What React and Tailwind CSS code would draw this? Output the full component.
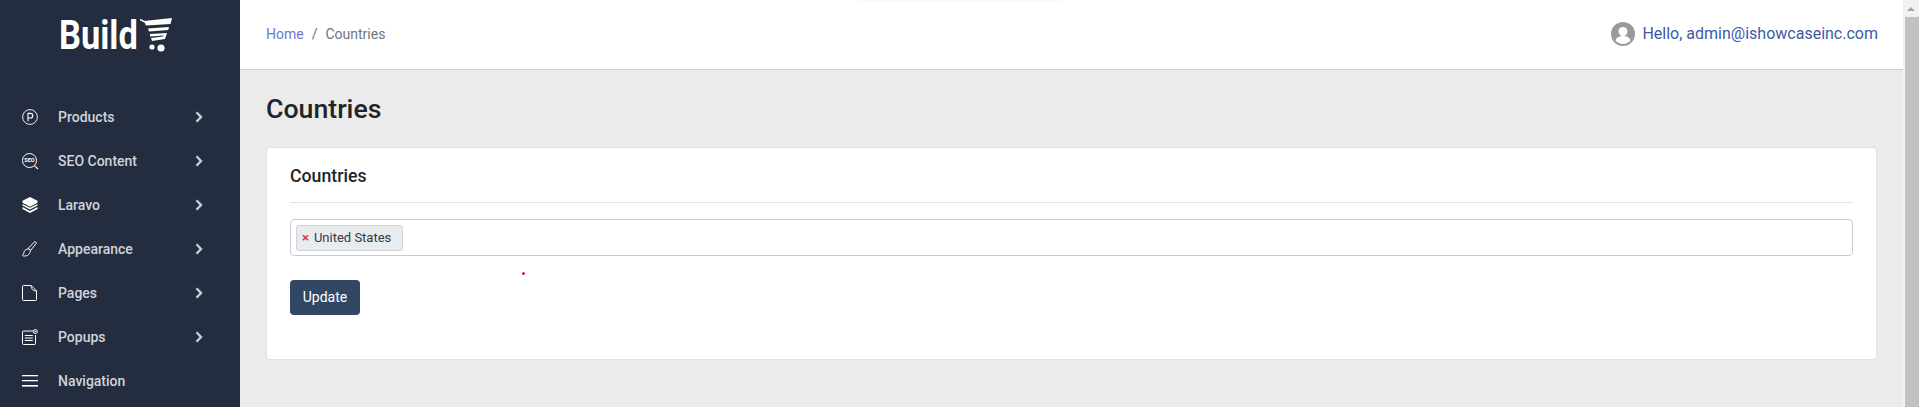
const font = { fontFamily: "Roboto, sans-serif" };

function ProductsIcon() {
  return (
    <svg width="16" height="16" viewBox="0 0 16 16" fill="none" stroke="#fff">
      <circle cx="8" cy="8" r="7.4" strokeWidth="0.9" />
      <path d="M6 12.2V4.400h2.500a2.300 2.300 0 0 1 0 4.600H6" strokeWidth="1.100" />
    </svg>
  );
}

function SeoIcon() {
  return (
    <svg width="17" height="17" viewBox="0 0 17 17" fill="none" stroke="#fff">
      <circle cx="7.500" cy="7.500" r="7" strokeWidth="1" />
      <path d="M12.400 12.600 16 16" strokeWidth="1.100" />
      <text x="7.500" y="9.300" fontSize="5.500" fontWeight="700" textAnchor="middle" fill="#fff" stroke="none" fontFamily="Roboto, sans-serif">SEO</text>
    </svg>
  );
}

function LayersIcon() {
  return (
    <svg width="16" height="16" viewBox="0 0 16 16" fill="#fff">
      <path d="M8 0 15.500 3.800v2L8 9.700.5 5.800v-2z" />
      <path d="M.5 6.900 8 10.800l7.500-3.900v1.700L8 12.500.5 8.600z" />
      <path d="M.5 10 8 13.900l7.500-3.900v2L8 16 .5 12z" />
    </svg>
  );
}

function BrushIcon() {
  return (
    <svg width="16" height="16" viewBox="0 0 16 16" fill="none" stroke="#fff" strokeWidth="1" strokeLinejoin="round">
      <path d="M6.200 7.200 12.600.9c.7-.6 2.200.8 1.600 1.600L8.600 9.400z" />
      <path d="M5.200 8.200c1-.7 2.400-.4 2.900 1 .5 1.500-.2 3.200-1.700 4.600-1 .9-3 1.400-5 1.200-.8-.1-.9-.8-.5-1.300 1-1 .9-2 1.400-3.400.4-1.100 1.200-1.600 2.900-2.100z" />
    </svg>
  );
}

function PageIcon() {
  return (
    <svg width="15" height="16" viewBox="0 0 15 16" fill="none" stroke="#fff" strokeWidth="1" strokeLinejoin="round">
      <path d="M1.500.5h7.700l5.300 5.400v8.600a1 1 0 0 1-1 1h-12a1 1 0 0 1-1-1V1.500a1 1 0 0 1 1-1z" />
      <path d="M9.200.5c0 2.400.5 5.400 5.300 5.400" />
    </svg>
  );
}

function PopupIcon() {
  return (
    <svg width="16" height="16" viewBox="0 0 16 16" fill="none" stroke="#fff" strokeWidth="1">
      <path d="M11 2H1.500a1 1 0 0 0-1 1v11.500a1 1 0 0 0 1 1h11a1 1 0 0 0 1-1V6" />
      <path d="M2.800 6.500h8M2.800 9h8M2.800 11.500h8" strokeWidth="1.100" />
      <circle cx="13.300" cy="2.500" r="2" />
      <circle cx="13.300" cy="2.500" r="0.800" fill="#fff" stroke="none" />
    </svg>
  );
}

function MenuIcon() {
  return (
    <svg width="16" height="12" viewBox="0 0 16 12" fill="#fff">
      <rect y="0" width="16" height="1.300" />
      <rect y="5" width="16" height="1.300" />
      <rect y="10" width="16" height="1.600" />
    </svg>
  );
}

function Chevron() {
  return (
    <svg width="8" height="12" viewBox="0 0 8 12" fill="none" stroke="#c5cedb" strokeWidth="2.400">
      <path d="M1.500 1.200 6 6l-4.500 4.800" />
    </svg>
  );
}

function CartLogo() {
  return (
    <svg width="32" height="34" viewBox="0 0 32 34" fill="#fff">
      <path d="M0 1.500 5 4" stroke="#fff" strokeWidth="1.400" />
      <path d="M4 3 32 0l-1.500 6L6 7.500z" />
      <path d="M8 10.500 29 9l-.8 3L9 13.500z" />
      <path d="M10 16 27 15l-2 6-13 2-1-3 12-1.500 1-1-14 1z" />
      <circle cx="12" cy="29" r="2.600" />
      <circle cx="21" cy="30" r="3.600" />
    </svg>
  );
}

const menu = [
  { label: "Products", icon: <ProductsIcon />, arrow: true },
  { label: "SEO Content", icon: <SeoIcon />, arrow: true },
  { label: "Laravo", icon: <LayersIcon />, arrow: true },
  { label: "Appearance", icon: <BrushIcon />, arrow: true },
  { label: "Pages", icon: <PageIcon />, arrow: true },
  { label: "Popups", icon: <PopupIcon />, arrow: true },
  { label: "Navigation", icon: <MenuIcon />, arrow: false },
];

function Sidebar() {
  return (
    <aside className="w-[240px] shrink-0 h-full bg-[#232d3f] overflow-hidden">
      <div className="h-[95px] pl-[59px] pt-[18px] flex items-start">
        <div className="w-[81px] h-[34px] text-white font-bold text-[40px] leading-[35px] scale-x-[0.86] origin-left whitespace-nowrap">
          Build
        </div>
        <CartLogo />
      </div>
      {menu.map((item) => (
        <div key={item.label} className="h-[44px] flex items-center pl-[22px] pr-[37px]">
          <div className="w-[36px] flex items-center">{item.icon}</div>
          <span className="flex-1 text-[14px] font-medium text-[#d0d3d8]">{item.label}</span>
          {item.arrow && <Chevron />}
        </div>
      ))}
    </aside>
  );
}

function Header() {
  return (
    <header className="relative h-[70px] shrink-0 bg-white border-b border-[#cfcfcf] flex items-center justify-between pl-[26px] pr-[25px]">
      <div className="absolute left-[620px] top-[-6px] w-[200px] h-[6px] shadow-[0_1px_4px_rgba(0,0,0,0.05)]" />
      <div className="flex items-center text-[14px]">
        <span className="text-[#6a7bc8]">Home</span>
        <span className="text-[#6c757d] mx-[8px]">/</span>
        <span className="text-[#6c757d]">Countries</span>
      </div>
      <div className="flex items-center -mt-[1px]">
        <svg width="24" height="24" viewBox="0 0 24 24" className="mr-[7px]">
          <circle cx="12" cy="12" r="12" fill="#9a9a9a" />
          <circle cx="12" cy="9.500" r="4.500" fill="#fff" />
          <path d="M4.500 18.500c1-3.500 4-4.500 7.500-4.500s6.500 1 7.500 4.500A10 10 0 0 1 12 22a10 10 0 0 1-7.500-3.500z" fill="#fff" />
        </svg>
        <span className="text-[16px] text-[#3b5ba5]">Hello, admin@ishowcaseinc.com</span>
      </div>
    </header>
  );
}

function Scrollbar() {
  return (
    <div className="w-[16px] shrink-0 h-full bg-[#f1f1f1] flex flex-col">
      <div className="h-[17px] flex items-center justify-center">
        <div className="w-0 h-0 border-x-[4px] border-x-transparent border-b-[4px] border-b-[#a3a3a3]" />
      </div>
      <div className="flex-1 ml-[2px] bg-[#c1c1c1]" />
    </div>
  );
}

export default function App() {
  return (
    <div className="flex w-full h-[407px] overflow-hidden bg-[#ebebeb]" style={font}>
      <Sidebar />
      <div className="flex-1 min-w-0 flex flex-col">
        <Header />
        <main className="flex-1 pl-[26px] pr-[26px] pt-[20px]">
          <h1 className="text-[26.700px] leading-[39px] font-medium text-[#212529] mb-[18px]">Countries</h1>
          <section className="relative h-[213px] bg-white border border-[#e1e1e1] rounded-[4px] px-[23px]">
            <h2 className="h-[55px] pt-[2px] flex items-center text-[17.700px] font-medium text-[#212529] border-b border-[#e3e3e3]">
              Countries
            </h2>
            <div className="mt-[16px] h-[37px] border border-[#c9c9d6] rounded-[4px] pl-[5px] flex items-center">
              <div className="h-[26px] pl-[5px] pr-[11px] bg-[#e9ecef] border border-[#ced4da] rounded-[3px] flex items-center text-[13px] text-[#343a40]">
                <span className="text-[#dc3545] text-[13px] font-bold mr-[5px] leading-none">×</span>
                United States
              </div>
            </div>
            <button className="mt-[24px] w-[70px] h-[35px] rounded-[4px] bg-[#324764] text-white text-[14px]">
              Update
            </button>
            <div className="absolute left-[255px] top-[124px] w-[3px] h-[3px] rounded-full bg-[#e8102a]" />
          </section>
        </main>
      </div>
      <Scrollbar />
    </div>
  );
}
